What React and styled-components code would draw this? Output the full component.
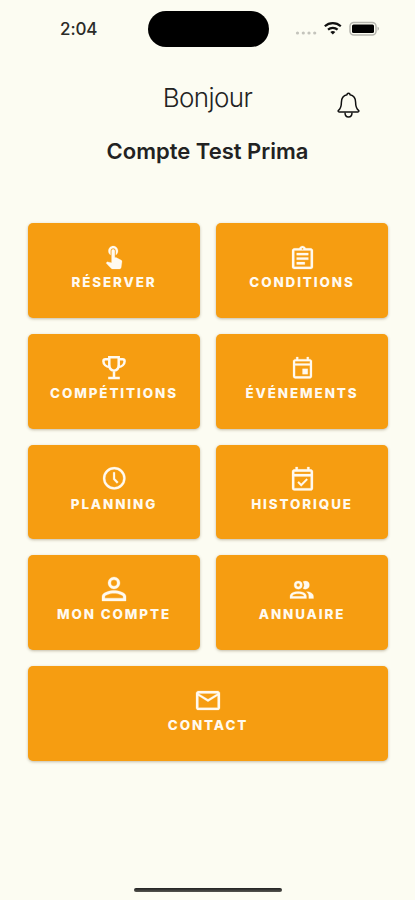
import React from 'react'
import styled, { createGlobalStyle } from 'styled-components'

const GlobalStyle = createGlobalStyle`
  * {
    box-sizing: border-box;
  }
  body {
    margin: 0;
    background: #fcfcf2;
    font-family: Inter, 'Liberation Sans', sans-serif;
  }
`

const Screen = styled.main`
  display: flex;
  flex-direction: column;
  width: 415px;
  height: 900px;
  overflow: hidden;
  background: #fcfcf2;
`

const StatusBar = styled.div`
  display: grid;
  grid-template-columns: 147.500px 121px 1fr;
  align-items: center;
  height: 36px;
  margin-top: 11px;
`

const Time = styled.span`
  padding-left: 60px;
  font-size: 17px;
  font-weight: 450;
  letter-spacing: -0.1px;
  color: #2b2b28;
`

const Island = styled.div`
  height: 36px;
  border-radius: 18px;
  background: #000;
`

const StatusIcons = styled.div`
  display: flex;
  align-items: center;
  padding-left: 26px;
  svg {
    display: block;
  }
`

const Header = styled.header`
  display: grid;
  grid-template-columns: 75px 1fr 75px;
  align-items: start;
  height: 54px;
  margin-top: 35px;
`

const Greeting = styled.h1`
  grid-column: 2;
  margin: 0;
  text-align: center;
  font-size: 26px;
  line-height: 32px;
  font-weight: 300;
  letter-spacing: -0.6px;
  color: #222;
`

const BellButton = styled.button`
  margin: 10px 0 0 -3px;
  padding: 0;
  width: 23px;
  height: 27px;
  border: 0;
  background: none;
  svg {
    display: block;
  }
`

const AccountName = styled.h2`
  margin: 0;
  text-align: center;
  font-size: 22px;
  line-height: 30px;
  font-weight: 600;
  letter-spacing: 0;
  color: #222;
`

const Menu = styled.nav`
  display: grid;
  grid-template-columns: 1fr 1fr;
  grid-auto-rows: 94.8px;
  gap: 16px;
  margin: 57px 27px 0 28px;
`

const Tile = styled.button`
  grid-column: ${props => (props.$wide ? 'span 2' : 'auto')};
  display: flex;
  flex-direction: column;
  align-items: center;
  padding: 19px 0 0;
  border: 0;
  border-radius: 5px;
  background: #f69d11;
  box-shadow: 0 1px 3px rgba(90, 70, 30, 0.35);
  font-family: inherit;
  color: #fffaf0;
`

const IconSlot = styled.span`
  display: flex;
  align-items: center;
  justify-content: center;
  height: 30px;
  svg {
    overflow: visible;
  }
`

const Label = styled.span`
  margin-top: 2px;
  font-size: 13.4px;
  line-height: 17px;
  font-weight: 800;
  letter-spacing: 1.9px;
  white-space: nowrap;
`

const HomeIndicator = styled.div`
  width: 148px;
  height: 4px;
  margin: auto auto 8px 134px;
  border-radius: 2px;
  background: linear-gradient(#222, #55554f);
`

// box is the drawn area of the 24px glyph
const ICONS = {
  touch: {
    box: '4.75 3 15 21',
    width: 16,
    height: 23,
    d:
      'M9 11.24V7.5C9 6.12 10.12 5 11.5 5S14 6.12 14 7.5v3.74c1.21-.81 2-2.18 2-3.74C16 5.01 13.99 3 11.5 3S7 5.01 7 7.5c0 1.56.79 2.93 2 3.74zm9.84 4.63l-4.54-2.26c-.17-.07-.35-.11-.54-.11H13v-6c0-.83-.67-1.5-1.5-1.5S10 6.67 10 7.5v10.74l-3.43-.72c-.08-.01-.15-.03-.24-.03-.31 0-.59.13-.79.33l-.79.8 4.94 4.94c.27.27.65.44 1.06.44h6.79c.75 0 1.33-.55 1.44-1.28l.75-5.27c.01-.07.02-.14.02-.2 0-.62-.38-1.16-.91-1.38z'
  },
  clipboard: {
    box: '3 1 18 20',
    width: 21,
    height: 23,
    d:
      'M7 15h7v2H7zm0-4h10v2H7zm0-4h10v2H7zm12-4h-4.18C14.4 1.84 13.3 1 12 1s-2.4.84-2.82 2H5c-1.1 0-2 .9-2 2v14c0 1.1.9 2 2 2h14c1.1 0 2-.9 2-2V5c0-1.1-.9-2-2-2zm-7-.25c.41 0 .75.34.75.75s-.34.75-.75.75-.75-.34-.75-.75.34-.75.75-.75zM19 19H5V5h14v14z'
  },
  trophy: {
    box: '0 0 24 23.5',
    width: 24,
    height: 23.5,
    line: true,
    d:
      'M7.300 1.300h9.400v7.200c0 4.200-1.900 6-4.700 6.300-2.800-.3-4.700-2.100-4.700-6.300zM7.300 3.200H3.400c-1.300 0-2 .7-2 2 0 3.200 2.700 5.500 6.200 5.900M16.700 3.200h3.900c1.300 0 2 .7 2 2 0 3.200-2.700 5.500-6.200 5.900M12 14.800v7M6.200 22h11.600'
  },
  event: {
    box: '3 2 18 20',
    width: 19,
    height: 21.5,
    d:
      'M19 4h-1V2h-2v2H8V2H6v2H5c-1.110 0-1.990.9-1.990 2L3 20a2 2 0 0 0 2 2h14c1.100 0 2-.9 2-2V6c0-1.100-.9-2-2-2zm0 16H5V10h14v10zm0-12H5V6h14v2zm-7 5h5v5h-5z'
  },
  clock: {
    box: '2 2 20 20',
    width: 22.5,
    height: 22.5,
    d:
      'M12 20a8 8 0 1 0 0-16 8 8 0 0 0 0 16m0-18a10 10 0 1 1 0 20 10 10 0 0 1 0-20m.7 4.700v5.600l3 3.100-1.300 1.300L11 13V6.700h1.700z'
  },
  eventDone: {
    box: '3 2 18 20',
    width: 21,
    height: 23.5,
    d:
      'M19 4h-1V2h-2v2H8V2H6v2H5c-1.110 0-2 .9-2 2v14a2 2 0 0 0 2 2h14c1.100 0 2-.9 2-2V6c0-1.100-.9-2-2-2zm0 16H5V10h14v10zm0-12H5V6h14v2zm-2.500 4.900-5.600 5.600-3.200-3.200 1.100-1.100 2.100 2.100 4.500-4.500z'
  },
  account: {
    box: '4 4 16 16',
    width: 24,
    height: 24,
    d:
      'M12 4a4 4 0 1 1 0 8 4 4 0 0 1 0-8m0 1.900a2.100 2.100 0 1 0 0 4.200 2.100 2.100 0 0 0 0-4.200M12 13c2.670 0 8 1.330 8 4v3H4v-3c0-2.670 5.330-4 8-4m0 1.900c-2.970 0-6.100 1.460-6.100 2.100v1.100h12.200V17c0-.64-3.130-2.100-6.100-2.100z'
  },
  people: {
    box: '2 4 20 15',
    width: 23.5,
    height: 17.5,
    d:
      'M13.070 10.410A5 5 0 0 0 13.070 4.590A3.390 3.390 0 0 1 15 4A3.500 3.500 0 0 1 15 11A3.390 3.390 0 0 1 13.070 10.410M5.500 7.500A3.500 3.500 0 1 1 9 11A3.500 3.500 0 0 1 5.500 7.500M7.500 7.500A1.500 1.500 0 1 0 9 6A1.500 1.500 0 0 0 7.500 7.500M16 17V19H2V17S2 13 9 13 16 17 16 17M14 17C13.860 16.220 12.670 15 9 15S4.070 16.310 4 17M15.950 13A5.320 5.320 0 0 1 18 17V19H22V17S22 13.370 15.940 13Z'
  },
  mail: {
    box: '2 4 20 16',
    width: 24,
    height: 19,
    d:
      'M22 6c0-1.100-.9-2-2-2H4c-1.100 0-2 .9-2 2v12c0 1.100.9 2 2 2h16c1.100 0 2-.9 2-2V6zm-2 0-8 5-8-5h16zm0 12H4V8l8 5 8-5v10z'
  }
}

const MENU_ITEMS = [
  { label: 'RÉSERVER', icon: 'touch' },
  { label: 'CONDITIONS', icon: 'clipboard' },
  { label: 'COMPÉTITIONS', icon: 'trophy' },
  { label: 'ÉVÉNEMENTS', icon: 'event' },
  { label: 'PLANNING', icon: 'clock' },
  { label: 'HISTORIQUE', icon: 'eventDone' },
  { label: 'MON COMPTE', icon: 'account' },
  { label: 'ANNUAIRE', icon: 'people' },
  { label: 'CONTACT', icon: 'mail', wide: true }
]

const MenuIcon = ({ name }) => {
  const { box, width, height, line, d } = ICONS[name]
  return (
    <svg
      width={width}
      height={height}
      viewBox={box}
      preserveAspectRatio="none"
      fill={line ? 'none' : 'currentColor'}
      fillRule="evenodd"
      stroke="currentColor"
      strokeWidth={line ? 2.5 : 0.2}
      aria-hidden="true"
    >
      <path d={d} />
    </svg>
  )
}

const SystemIcons = () => (
  <svg width="86" height="18" viewBox="0 0 86 18" aria-hidden="true">
    <g fill="#c4c4bc">
      <circle cx="2.500" cy="13" r="1.600" />
      <circle cx="8.300" cy="13" r="1.600" />
      <circle cx="14" cy="13" r="1.600" />
      <circle cx="19.700" cy="13" r="1.600" />
    </g>
    <g fill="none" stroke="#111" strokeWidth="2.200">
      <path d="M29.800 6.200a12 12 0 0 1 16 0" />
      <path d="M33 9.600a7.300 7.300 0 0 1 9.600 0" />
    </g>
    <path d="M35.300 11.900a4 4 0 0 1 5 0l-2.500 2.600z" fill="#111" />
    <rect
      x="55"
      y="2.500"
      width="26"
      height="12.500"
      rx="3.800"
      fill="none"
      stroke="#b5b5ae"
      strokeWidth="1.500"
    />
    <rect x="57" y="4.500" width="22" height="8.500" rx="1.500" fill="#000" />
    <path d="M82.500 6.800c2 .6 2 3.300 0 3.900z" fill="#b5b5ae" />
  </svg>
)

const Bell = () => (
  <svg
    width="23"
    height="27"
    viewBox="0 0 23 27"
    fill="none"
    stroke="#111"
    strokeWidth="1.500"
    strokeLinejoin="round"
    aria-hidden="true"
  >
    <path d="M10 2.700c0-2 3-2 3 0 3.900.8 5.600 3.600 5.600 7.500 0 4.800.8 6.400 2.900 8.100.7.600.4 1.700-.6 1.700H2.100c-1 0-1.300-1.100-.6-1.700 2.100-1.700 2.900-3.300 2.900-8.100 0-3.900 1.700-6.700 5.600-7.500z" />
    <path d="M8 20.500c0 6 7 6 7 0" />
  </svg>
)

const App = () => {
  return (
    <Screen>
      <GlobalStyle />
      <StatusBar>
        <Time>2:04</Time>
        <Island />
        <StatusIcons>
          <SystemIcons />
        </StatusIcons>
      </StatusBar>
      <Header>
        <Greeting>Bonjour</Greeting>
        <BellButton aria-label="Notifications">
          <Bell />
        </BellButton>
      </Header>
      <AccountName>Compte Test Prima</AccountName>
      <Menu>
        {MENU_ITEMS.map(item => (
          <Tile key={item.label} $wide={item.wide}>
            <IconSlot>
              <MenuIcon name={item.icon} />
            </IconSlot>
            <Label>{item.label}</Label>
          </Tile>
        ))}
      </Menu>
      <HomeIndicator />
    </Screen>
  )
}

export default App
